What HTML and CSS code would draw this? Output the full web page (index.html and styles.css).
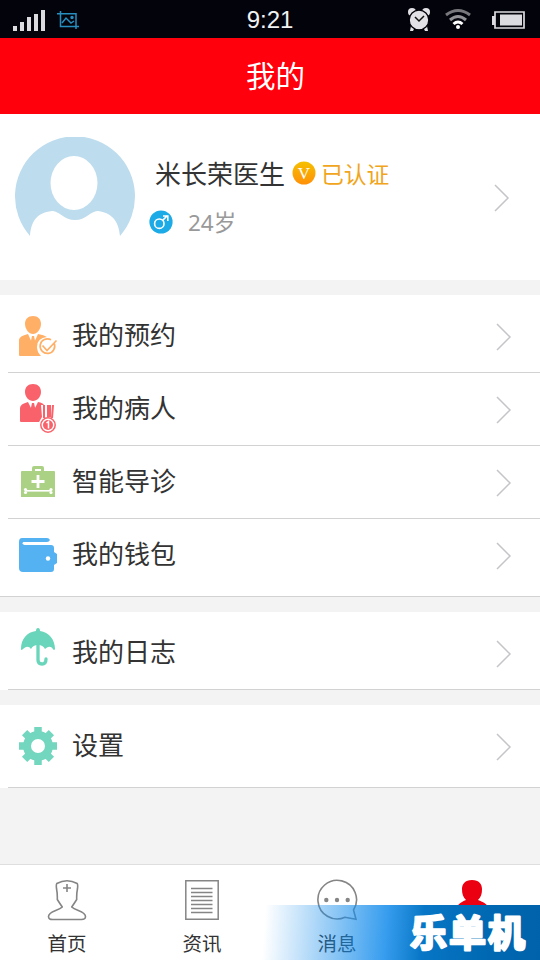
FILE: index.html
```html
<!DOCTYPE html>
<html lang="zh-CN">
<head>
<meta charset="utf-8">
<title>我的</title>
<link rel="stylesheet" href="styles.css">
</head>
<body>
<div class="app">
  <header class="status">
    <div class="status-left">
      <svg width="34" height="24" viewBox="0 0 34 24" fill="#dcdce0"><path d="M0 18h4v5H0zM7 14h4v9H7zM14 9h4v14h-4zM21 6h4v17h-4zM28 2h4v21h-4z"/></svg>
      <svg class="shot" width="22" height="18" viewBox="0 0 22 18" fill="none" stroke="#278fc0" stroke-width="1.500"><path d="M3.500 0v15.500H22M0 2.800h19V18M5 12l4-5 5 5 3-2"/><circle cx="15" cy="6.500" r="1" fill="#278fc0"/></svg>
    </div>
    <span class="clock">9:21</span>
    <div class="status-right">
      <svg width="24" height="26" viewBox="0 0 24 26"><g fill="#e2e2e6"><circle cx="5" cy="5" r="4"/><circle cx="19" cy="5" r="4"/><path d="M4 19l-1 5h3l2-4zM20 19l1 5h-3l-2-4z"/><circle cx="12" cy="13" r="9.800" stroke="#03030b" stroke-width="1.300"/></g><path d="M8 10l4 4 5-5" fill="none" stroke="#111" stroke-width="1.500"/></svg>
      <svg class="wifi" width="28" height="22" viewBox="0 0 28 22" fill="none" stroke-width="3"><path d="M2 7q12-9 24 0" stroke="#77777c"/><path d="M6 12q8-7 16 0" stroke="#919196"/><path d="M9.500 16q4.500-4 9 0" stroke="#fff"/><circle cx="14" cy="19" r="2" fill="#fff"/></svg>
      <svg width="35" height="18" viewBox="0 0 35 18"><path d="M1 5h3v9H1zM9 3.500h22v11H9z" fill="#dcdce0"/><path d="M4 1h29v16H4z" fill="none" stroke="#dcdce0" stroke-width="1.700"/></svg>
    </div>
  </header>
  <h1 class="title">我的</h1>

  <section class="profile">
    <svg class="avatar" width="120" height="120" viewBox="0 0 120 120"><path d="M15 99A60 60 0 1 1 105 99C104 87 99 76 83 74C77 73 71 83 60 83S43 73 37 74C21 76 16 85 15 99Z" fill="#bddced"/><ellipse cx="59" cy="46" rx="23.500" ry="27" fill="#fff"/></svg>
    <div class="info">
      <div class="name-row">
        <span class="name">米长荣医生</span>
        <svg width="24" height="24" viewBox="0 0 24 24"><defs><linearGradient id="gold" x2="0" y2="1"><stop stop-color="#f5c000"/><stop offset="1" stop-color="#ff9008"/></linearGradient></defs><circle cx="12" cy="12" r="11.500" fill="url(#gold)"/><text x="12" y="17.500" text-anchor="middle" class="vmark">V</text></svg>
        <span class="verified">已认证</span>
      </div>
      <div class="age-row">
        <svg width="24" height="24" viewBox="0 0 24 24"><circle cx="12" cy="12" r="11.600" fill="#1cabe7"/><g fill="none" stroke="#fff" stroke-width="1.600"><circle cx="10.300" cy="13.700" r="4.700"/><path d="M13.500 10.500l5-5M14 6h4.800v5"/></g></svg>
        <span class="age">24岁</span>
      </div>
    </div>
    <svg class="chev" viewBox="0 0 16 28"><path d="M1 1l13 13L1 27"/></svg>
  </section>

  <section class="group">
    <div class="row first">
      <svg class="ico" width="40" height="50" viewBox="0 0 40 50"><g fill="#ffb066"><path d="M15 5c5 0 8 3 8 8s-4 10-8 10-8-5-8-10 3-8 8-8zM1 44V29q0-4 9-6l5 11 5-11q6 1 9 3-10 1-10 10 0 5 4 9H2q-1 0-1-1z"/><path d="M14 25h2l2 9-3 4-3-4z"/></g><path d="M36 32a7.300 7.300 0 1 1-3-3.200M24.500 34.500l4.500 5 9.500-10" fill="none" stroke="#ffb066" stroke-width="1.700"/></svg>
      <span class="label">我的预约</span>
      <svg class="chev" viewBox="0 0 16 28"><path d="M1 1l13 13L1 27"/></svg>
    </div>
    <div class="row">
      <svg class="ico" width="40" height="50" viewBox="0 0 40 50"><g fill="#f9626b"><path d="M15 0c5 0 8 3 8 8s-4 9-8 9-8-4-8-9 3-8 8-8zM2 37V24q0-4 8-6l5 10 5-10q5 1 6 3h-3l1 12-3 5H3q-1 0-1-1z"/><path d="M14 19h2l2 9-3 4-3-4zM25 21h2v13h-2zM29 21h4v12h-4zM34 21h2l-1 13h-2z"/></g><circle cx="30" cy="41" r="7.200" fill="#fff" stroke="#f9626b" stroke-width="1.500"/><circle cx="30" cy="41" r="5" fill="#f9626b"/><path d="M28.500 39l2-1.500v7" fill="none" stroke="#fff" stroke-width="1.500"/></svg>
      <span class="label">我的病人</span>
      <svg class="chev" viewBox="0 0 16 28"><path d="M1 1l13 13L1 27"/></svg>
    </div>
    <div class="row">
      <svg class="ico" width="40" height="50" viewBox="0 0 40 50"><path d="M4 14h10v-3q0-2 2-2h8q2 0 2 2v3h10q1 0 1 1v25H3V15q0-1 1-1zm13 0h6v-2h-6z" fill="#abd184" fill-rule="evenodd"/><path d="M8 33.800h25" stroke="#fff" stroke-width="1.600"/><path d="M20 18v13M13.500 24.500h13" stroke="#fff" stroke-width="2.800"/><g fill="#fff"><circle cx="7.500" cy="32.500" r="1.600"/><circle cx="7.500" cy="35.500" r="1.600"/><circle cx="33" cy="32.500" r="1.600"/><circle cx="33" cy="35.500" r="1.600"/></g></svg>
      <span class="label">智能导诊</span>
      <svg class="chev" viewBox="0 0 16 28"><path d="M1 1l13 13L1 27"/></svg>
    </div>
    <div class="row last">
      <svg class="ico" width="40" height="50" viewBox="0 0 40 50"><path d="M4 8h25q2 0 3 2-1 2-3 2H6q-1 1 0 2 0 1 1 1h26q3 0 3 3v4l3 2v9l-3 2v4q0 3-3 3H5q-4 0-4-4V12q0-4 3-4z" fill="#54b2f2"/><path d="M6 13.300h26" stroke="#fff" stroke-width="2.800" stroke-linecap="round"/><circle cx="30" cy="28.500" r="2.200" fill="#fff"/></svg>
      <span class="label">我的钱包</span>
      <svg class="chev" viewBox="0 0 16 28"><path d="M1 1l13 13L1 27"/></svg>
    </div>
  </section>

  <section class="group">
    <div class="row first">
      <svg class="ico" width="40" height="50" viewBox="0 0 40 50"><path d="M20 0q2 0 2 3c9 1 15 9 15 18q-1 2-2 0-2-3-5-2-2 1-3 2-2-4-7-4t-7 4q-2-3-5-2-2 1-3 2-2 2-2 0C3 11 9 4 18 3q0-3 2-3z" fill="#69d5ba"/><path d="M20 16v16q0 4 4 4t4-5" fill="none" stroke="#69d5ba" stroke-width="3.300" stroke-linecap="round"/></svg>
      <span class="label">我的日志</span>
      <svg class="chev" viewBox="0 0 16 28"><path d="M1 1l13 13L1 27"/></svg>
    </div>
  </section>

  <section class="group">
    <div class="row settings">
      <svg class="ico" width="40" height="50" viewBox="0 0 40 50"><g fill="none" stroke="#73d7bf"><circle cx="20" cy="25" r="11" stroke-width="8"/><path d="M20 6v6M20 38v6M1 25h6M33 25h6M6.600 11.600l5 5M28.400 33.400l5 5M6.600 38.400l5-5M28.400 16.600l5-5" stroke-width="7.500"/></g></svg>
      <span class="label">设置</span>
      <svg class="chev" viewBox="0 0 16 28"><path d="M1 1l13 13L1 27"/></svg>
    </div>
  </section>

  <nav class="tabs">
    <div class="tab">
      <svg width="42" height="42" viewBox="0 0 42 42" fill="none" stroke="#858585" stroke-width="1.600" stroke-linejoin="round"><path d="M10.800 4.500q10.200-5.500 20.400 0 .8 1 .3 5-1 5-.8 11-2.500 4-5 7.500c4 4 13.800 4 13.800 9.500q0 3-4 3h-29q-4 0-4-3c0-5.500 9.800-5.500 13.800-9.500q-2.500-3.500-5-7.500.200-6-.8-11-.5-4 .3-5z"/><path d="M21 5v8M17 9h8"/></svg>
      <span>首页</span>
    </div>
    <div class="tab">
      <svg width="42" height="42" viewBox="0 0 42 42" fill="none" stroke="#858585" stroke-width="1.500"><path d="M4.800 1.800h32.400v38.400H4.800zM10 9.500h21.500M10 13.500h21.500M10 17.500h21.500M10 21.500h21.500M10 25.500h21.500M10 29.500h21.500M10 33.500h21.500"/></svg>
      <span>资讯</span>
    </div>
    <div class="tab">
      <svg width="42" height="42" viewBox="0 0 42 42"><path d="M40 40.200l-11-1.900A19.300 19.300 0 1 1 37.500 31z" fill="none" stroke="#858585" stroke-width="1.600"/><g fill="#858585"><circle cx="10.300" cy="21" r="2.200"/><circle cx="21" cy="21" r="2.200"/><circle cx="31.700" cy="21" r="2.200"/></g></svg>
      <span>消息</span>
    </div>
    <div class="tab">
      <svg width="42" height="42" viewBox="0 0 42 42"><path d="M21 1c7 0 10 4 10 9 0 5-1 8-4 11 5 2 12 4 13 15v4H3v-4c0-9 7-13 12-15-3-3-4-6-4-11C11 5 14 1 21 1z" fill="#eb0012"/></svg>
    </div>
    <div class="ribbon"><svg width="132" height="55" viewBox="0 0 132 55"><text x="2" y="42" class="brand">乐单机</text></svg></div>
  </nav>
</div>
</body>
</html>
```

FILE: styles.css
```css
* { box-sizing: border-box; }
body {
  margin: 0;
  font-family: "Liberation Sans", "Noto Sans CJK SC", sans-serif;
  color: #333;
}
svg { display: block; flex: none; }
.app {
  width: 540px;
  height: 960px;
  overflow: hidden;
  display: flex;
  flex-direction: column;
  background: #f3f3f3;
}
.status {
  height: 38px;
  flex: none;
  display: grid;
  grid-template-columns: 1fr auto 1fr;
  align-items: center;
  padding: 0 14px 0 13px;
  background: #03030b;
  color: #f2f2f2;
}
.status-left, .status-right { display: flex; align-items: center; }
.status-left { gap: 10px; }
.status-right { justify-content: flex-end; gap: 14px; }
.status-right .wifi { margin: 0 5px 1px -1px; }
.clock { font-size: 24px; line-height: 38px; padding: 1px 0 0 1px; }
.title {
  margin: 0;
  height: 76px;
  flex: none;
  background: #ff000c;
  color: #fff;
  font-size: 29.500px;
  font-weight: 400;
  line-height: 78px;
  text-align: center;
  padding-left: 11px;
}
.profile {
  height: 166px;
  flex: none;
  display: flex;
  align-items: flex-start;
  padding: 23px 30px 0 15px;
  background: #fff;
}
.info { flex: 1; padding: 18px 0 0 14px; }
.name-row, .age-row { display: flex; align-items: center; }
.name-row { padding-left: 6px; height: 40px; }
.name-row svg { margin: 0 5px 4px 7px; }
.name { font-size: 26px; line-height: 40px; }
.verified { font-size: 22.800px; line-height: 40px; color: #f0a51c; }
.vmark { font: 17px "Liberation Serif", serif; fill: #fff; }
.age-row { margin-top: 8px; height: 40px; }
.age { margin-left: 15px; font-family: "Noto Sans", "Noto Sans CJK SC", sans-serif; font-size: 22.500px; line-height: 40px; color: #999; }
.age-row svg { margin-bottom: 2px; }
.chev {
  width: 16px;
  height: 28px;
  fill: none;
  stroke: #c5c5c9;
  stroke-width: 1.500;
}
.profile .chev { margin-top: 47px; }
.group { margin-top: 15px; flex: none; background: #fff; }
.row {
  height: 73px;
  display: flex;
  align-items: center;
  margin-left: 8px;
  padding: 0 28px 0 10px;
  border-bottom: 1px solid #d2d2d2;
}
.row.first { height: 78px; padding-top: 5px; }
.row.last { height: 78px; margin-left: 0; padding: 0 28px 5px 18px; }
.row.settings { height: 83px; }
.label { flex: 1; margin-left: 14px; font-size: 26px; line-height: 40px; }
.row .chev { margin-top: 2px; }
.tabs {
  position: relative;
  height: 96px;
  margin-top: auto;
  flex: none;
  display: grid;
  grid-template-columns: repeat(4, 1fr);
  background: #fff;
  border-top: 1px solid #dedede;
}
.tab {
  display: flex;
  flex-direction: column;
  align-items: center;
  padding: 14px 1px 0 0;
  font-size: 19.500px;
  line-height: 30px;
}
.tab span { margin-top: 8px; }
.ribbon {
  position: absolute;
  right: 0;
  bottom: 0;
  width: 280px;
  height: 55px;
  display: flex;
  justify-content: flex-end;
  background: linear-gradient(94deg, rgba(20,140,235,0) 2%, rgba(20,140,235,.35) 20%, rgba(20,140,235,.85) 45%, #0876c6 58%, #0069b3 80%, #0062aa 100%);
}
.brand {
  font-family: "Noto Sans CJK SC", sans-serif;
  font-size: 37px;
  font-weight: 700;
  letter-spacing: 2px;
  fill: #fff;
  stroke: #fff;
  stroke-width: 2.500;
  stroke-linejoin: round;
}
```
